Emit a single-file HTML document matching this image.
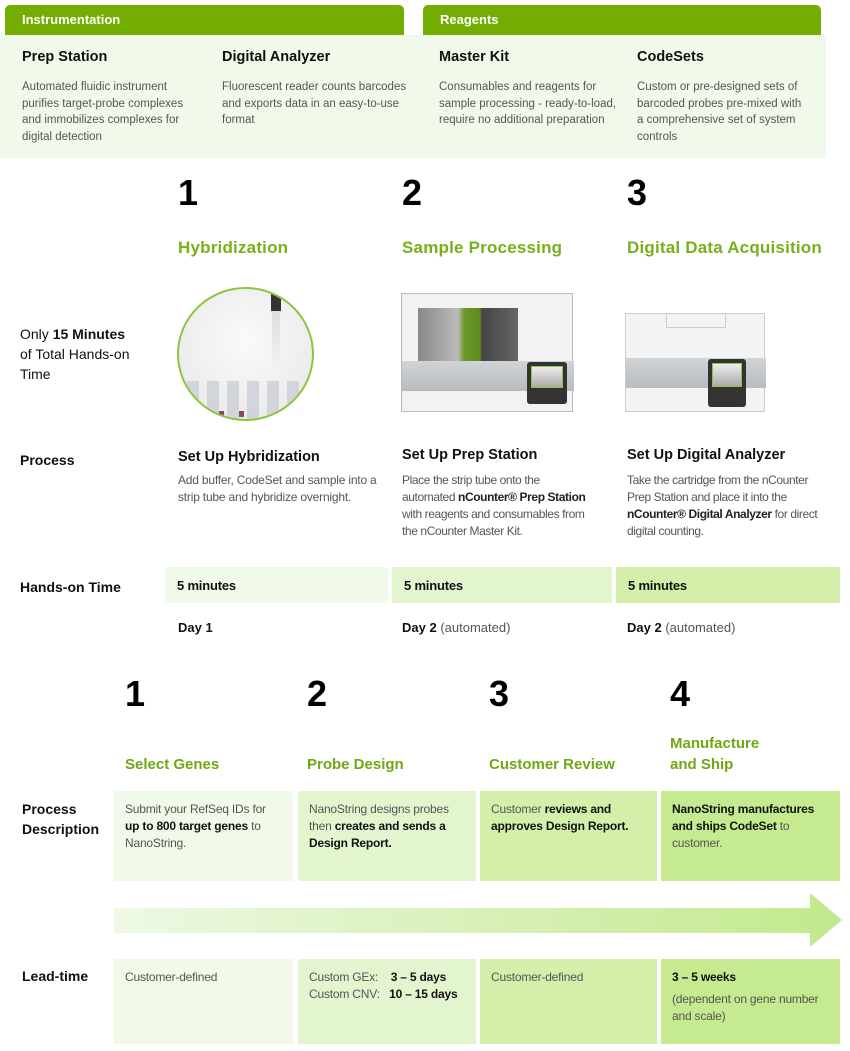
<!DOCTYPE html>
<html><head><meta charset="utf-8"><style>
*{margin:0;padding:0;box-sizing:border-box}
body{width:850px;height:1051px;background:#fff;position:relative;overflow:hidden;font-family:"Liberation Sans",sans-serif;color:#111}
.a{position:absolute}
.tab{background:#72ad00;color:#fff;font-weight:bold;font-size:13px;border-radius:5px 5px 0 0;padding:7px 0 0 17px;height:30px}
.h{font-weight:bold;font-size:14.5px;color:#111}
.d{font-size:11.5px;color:#555;line-height:16.6px;white-space:nowrap}
.num{font-weight:bold;font-size:36px;color:#000;line-height:1}
.g{color:#77b01a;font-size:17px;font-weight:bold;letter-spacing:.2px}
.g2{color:#6fa812;font-size:15px;font-weight:bold;line-height:21px}
.t{font-size:12px;color:#555;line-height:17px;letter-spacing:-.2px;white-space:nowrap}
.t b{color:#222}
.lab{font-size:14px;font-weight:bold;color:#111;line-height:20px}
.cell{position:absolute;padding:10px 11px;font-size:12px;color:#555;line-height:17px;letter-spacing:-.2px}
.cell b{color:#111}
.hc{font-size:13px;padding:10px 12px}
</style></head><body>
<div class="a tab" style="left:5px;top:5px;width:399px">Instrumentation</div>
<div class="a tab" style="left:423px;top:5px;width:398px">Reagents</div>
<div class="a" style="left:0;top:35px;width:826px;height:123px;background:#f1f9ea"></div>
<div class="a h" style="left:22px;top:49px">Prep Station</div>
<div class="a h" style="left:222px;top:49px">Digital Analyzer</div>
<div class="a h" style="left:439px;top:49px">Master Kit</div>
<div class="a h" style="left:637px;top:49px">CodeSets</div>
<div class="a d" style="left:22px;top:79px">Automated fluidic instrument<br>purifies target-probe complexes<br>and immobilizes complexes for<br>digital detection</div>
<div class="a d" style="left:222px;top:79px">Fluorescent reader counts barcodes<br>and exports data in an easy-to-use<br>format</div>
<div class="a d" style="left:439px;top:79px">Consumables and reagents for<br>sample processing - ready-to-load,<br>require no additional preparation</div>
<div class="a d" style="left:637px;top:79px">Custom or pre-designed sets of<br>barcoded probes pre-mixed with<br>a comprehensive set of system<br>controls</div>

<div class="a num" style="left:178px;top:175px">1</div>
<div class="a num" style="left:402px;top:175px">2</div>
<div class="a num" style="left:627px;top:175px">3</div>
<div class="a g" style="left:178px;top:238px">Hybridization</div>
<div class="a g" style="left:402px;top:238px">Sample Processing</div>
<div class="a g" style="left:627px;top:238px">Digital Data Acquisition</div>

<div class="a" style="left:20px;top:324px;font-size:14px;line-height:20px">Only <b>15 Minutes</b><br>of Total Hands-on<br>Time</div>

<div class="a" style="left:177px;top:287px;width:137px;height:134px;border-radius:50%;border:2px solid #8cc63f;background:radial-gradient(circle at 50% 40%,#fafafa,#e6e6e6);overflow:hidden">
  <div class="a" style="left:92px;top:0;width:10px;height:22px;background:#333"></div>
  <div class="a" style="left:93px;top:22px;width:8px;height:60px;background:linear-gradient(#ddd,#f3f3f3)"></div>
  <div class="a" style="left:0;top:92px;width:137px;height:40px;background:repeating-linear-gradient(90deg,transparent 0 8px,rgba(200,205,212,.75) 8px 20px)"></div>
  <div class="a" style="left:40px;top:122px;width:5px;height:6px;background:#8a4a5a"></div>
  <div class="a" style="left:60px;top:122px;width:5px;height:6px;background:#8a4a5a"></div>
</div>
<div class="a" style="left:401px;top:293px;width:172px;height:119px;background:#f2f2f2;border:1px solid #bbb">
  <div class="a" style="left:16px;top:14px;width:100px;height:64px;background:linear-gradient(90deg,#888,#bbb 40%,#6d9a2a 46%,#5d8a1e 62%,#444 64%,#666)"></div>
  <div class="a" style="left:0;top:67px;width:172px;height:30px;background:linear-gradient(#d0d4d6,#b8bcbe)"></div>
  <div class="a" style="left:125px;top:68px;width:40px;height:42px;background:#333;border-radius:3px"></div>
  <div class="a" style="left:129px;top:72px;width:32px;height:22px;background:linear-gradient(#eee,#aaa);border:1px solid #8cc63f"></div>
</div>
<div class="a" style="left:625px;top:313px;width:140px;height:99px;background:#f3f3f3;border:1px solid #ccc">
  <div class="a" style="left:40px;top:0;width:60px;height:14px;border:1px solid #ccc;border-top:0"></div>
  <div class="a" style="left:0;top:44px;width:140px;height:30px;background:linear-gradient(#d0d4d6,#b8bcbe)"></div>
  <div class="a" style="left:82px;top:45px;width:38px;height:48px;background:#333;border-radius:3px"></div>
  <div class="a" style="left:86px;top:49px;width:30px;height:24px;background:linear-gradient(#eee,#aaa);border:1px solid #8cc63f"></div>
</div>

<div class="a lab" style="left:20px;top:450px">Process</div>
<div class="a h" style="left:178px;top:449px">Set Up Hybridization</div>
<div class="a h" style="left:402px;top:447px">Set Up Prep Station</div>
<div class="a h" style="left:627px;top:447px">Set Up Digital Analyzer</div>
<div class="a t" style="left:178px;top:472px">Add buffer, CodeSet and sample into a<br>strip tube and hybridize overnight.</div>
<div class="a t" style="left:402px;top:472px;letter-spacing:-.4px">Place the strip tube onto the<br>automated <b>nCounter® Prep Station</b><br>with reagents and consumables from<br>the nCounter Master Kit.</div>
<div class="a t" style="left:627px;top:472px;letter-spacing:-.4px">Take the cartridge from the nCounter<br>Prep Station and place it into the<br><b>nCounter® Digital Analyzer</b> for direct<br>digital counting.</div>

<div class="a lab" style="left:20px;top:577px">Hands-on Time</div>
<div class="cell hc" style="left:165px;top:567px;width:223px;height:36px;background:#f1f9e9"><b>5 minutes</b></div>
<div class="cell hc" style="left:392px;top:567px;width:220px;height:36px;background:#e2f5cf"><b>5 minutes</b></div>
<div class="cell hc" style="left:616px;top:567px;width:224px;height:36px;background:#d3efa9"><b>5 minutes</b></div>
<div class="a" style="left:178px;top:620px;font-size:13px"><b>Day 1</b></div>
<div class="a" style="left:402px;top:620px;font-size:13px;color:#555"><b style="color:#111">Day 2</b> (automated)</div>
<div class="a" style="left:627px;top:620px;font-size:13px;color:#555"><b style="color:#111">Day 2</b> (automated)</div>

<div class="a num" style="left:125px;top:676px">1</div>
<div class="a num" style="left:307px;top:676px">2</div>
<div class="a num" style="left:489px;top:676px">3</div>
<div class="a num" style="left:670px;top:676px">4</div>
<div class="a g2" style="left:125px;top:754px">Select Genes</div>
<div class="a g2" style="left:307px;top:754px">Probe Design</div>
<div class="a g2" style="left:489px;top:754px">Customer Review</div>
<div class="a g2" style="left:670px;top:733px">Manufacture<br>and Ship</div>

<div class="a lab" style="left:22px;top:799px">Process<br>Description</div>
<div class="cell" style="left:114px;top:791px;width:179px;height:90px;background:#f1f9e9">Submit your RefSeq IDs for <b>up to 800 target genes</b> to NanoString.</div>
<div class="cell" style="left:298px;top:791px;width:178px;height:90px;background:#e2f5cf">NanoString designs probes then <b>creates and sends a Design Report.</b></div>
<div class="cell" style="left:480px;top:791px;width:177px;height:90px;background:#d3efa9">Customer <b>reviews and approves Design Report.</b></div>
<div class="cell" style="left:661px;top:791px;width:179px;height:90px;background:#c5ea8f"><b>NanoString manufactures and ships CodeSet</b> to customer.</div>

<svg class="a" style="left:114px;top:893px" width="736" height="56"><defs><linearGradient id="ar" x1="0" x2="1"><stop offset="0" stop-color="#eef8e4"/><stop offset="1" stop-color="#c2e98c"/></linearGradient></defs><polygon points="0,15 696,15 696,0 728,27 696,54 696,40 0,40" fill="url(#ar)"/></svg>

<div class="a lab" style="left:22px;top:966px">Lead-time</div>
<div class="cell" style="left:114px;top:959px;width:179px;height:85px;background:#f1f9e9">Customer-defined</div>
<div class="cell" style="left:298px;top:959px;width:178px;height:85px;background:#e2f5cf">Custom GEx:&nbsp;&nbsp;&nbsp;&nbsp;<b>3 – 5 days</b><br>Custom CNV:&nbsp;&nbsp;&nbsp;<b>10 – 15 days</b></div>
<div class="cell" style="left:480px;top:959px;width:177px;height:85px;background:#d3efa9">Customer-defined</div>
<div class="cell" style="left:661px;top:959px;width:179px;height:85px;background:#c5ea8f"><b>3 – 5 weeks</b><div style="margin-top:5px">(dependent on gene number and scale)</div></div>
</body></html>
